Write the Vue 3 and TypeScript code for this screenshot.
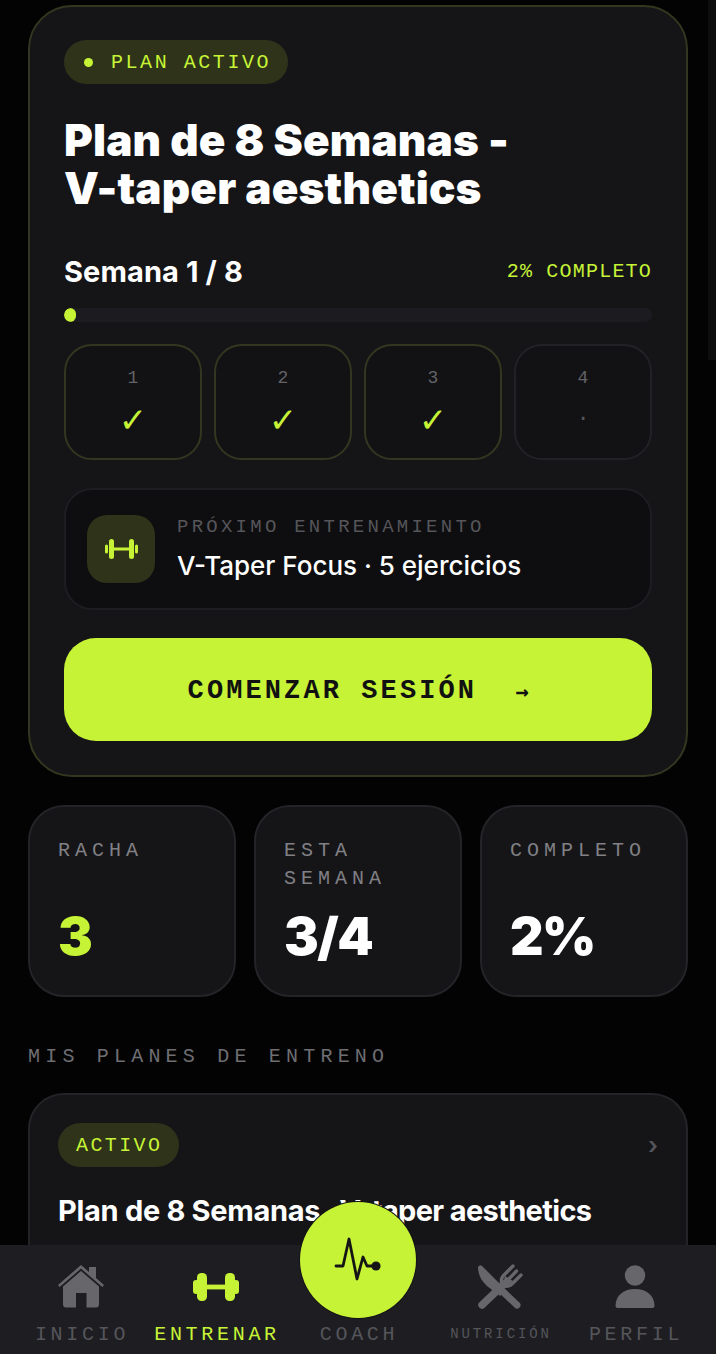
<script setup lang="ts">
interface Week {
  n: number
  done: boolean
}
interface Stat {
  label: string
  value: string
  accent?: boolean
}

const weeks: Week[] = [
  { n: 1, done: true },
  { n: 2, done: true },
  { n: 3, done: true },
  { n: 4, done: false },
]

const stats: Stat[] = [
  { label: 'RACHA', value: '3', accent: true },
  { label: 'ESTA SEMANA', value: '3/4' },
  { label: 'COMPLETO', value: '2%' },
]

const progress = 2
</script>

<template>
  <div class="screen">
    <div class="scroll-thumb"></div>
    <main class="content">
      <!-- plan activo -->
      <section class="hero">
        <div class="pill"><span class="dot"></span>PLAN ACTIVO</div>
        <h1 class="hero-title">Plan de 8 Semanas -<br />V-taper aesthetics</h1>
        <div class="week-row">
          <span class="week-name">Semana 1 / 8</span>
          <span class="week-pct">{{ progress }}% COMPLETO</span>
        </div>
        <div class="bar"><div class="bar-fill" :style="{ width: progress + '%' }"></div></div>
        <div class="weeks">
          <div v-for="w in weeks" :key="w.n" class="week" :class="{ done: w.done }">
            <span class="week-n">{{ w.n }}</span>
            <span v-if="w.done" class="week-check">✓</span>
            <span v-else class="week-dot">·</span>
          </div>
        </div>
        <div class="next">
          <div class="next-icon">
            <svg width="33" height="20" viewBox="0 0 33 20" fill="#c7f336">
              <rect x="0" y="5.5" width="3" height="9" rx="1.5" />
              <rect x="4" y="0" width="5" height="20" rx="2.5" />
              <rect x="9" y="8.5" width="15" height="3" />
              <rect x="24" y="0" width="5" height="20" rx="2.5" />
              <rect x="30" y="5.5" width="3" height="9" rx="1.5" />
            </svg>
          </div>
          <div class="next-text">
            <div class="next-label">PRÓXIMO ENTRENAMIENTO</div>
            <div class="next-title">V-Taper Focus · 5 ejercicios</div>
          </div>
        </div>
        <button class="start">
          <span>COMENZAR SESIÓN</span>
          <span class="start-arrow">→</span>
        </button>
      </section>

      <!-- stats -->
      <section class="stats">
        <div v-for="s in stats" :key="s.label" class="stat">
          <div class="stat-label">{{ s.label }}</div>
          <div class="stat-value" :class="{ accent: s.accent }">{{ s.value }}</div>
        </div>
      </section>

      <h2 class="section-title">MIS PLANES DE ENTRENO</h2>

      <section class="plan">
        <div class="plan-top">
          <span class="plan-pill">ACTIVO</span>
          <span class="chevron">›</span>
        </div>
        <div class="plan-title"><span class="plan-title-a">Plan de 8 Semanas</span> <span class="plan-title-dash">-</span> V-taper aesthetics</div>
      </section>
    </main>

    <!-- navegación inferior -->
    <nav class="nav">
      <div class="nav-item">
        <svg class="nav-icon" width="46" height="43" viewBox="0 0 46 43" fill="#66666b">
          <path d="M23 0 L31 7 V2 H38 V13 L46 20 L44.4 22 L23 3.6 L1.6 22 L0 20 Z" />
          <path d="M23 6 L41 21.5 V39 Q41 42.5 38 42.5 H28.5 V28 H18 V42.5 H8 Q5 42.5 5 39 V21.5 Z" />
        </svg>
        <span class="nav-label">INICIO</span>
      </div>
      <div class="nav-item active">
        <svg class="nav-icon" width="46" height="28" viewBox="0 0 46 28" fill="#c7f336">
          <rect x="0" y="7" width="6" height="14" rx="3" />
          <rect x="4" y="0" width="10" height="28" rx="4.5" />
          <rect x="13" y="11.6" width="20" height="4.8" />
          <rect x="32" y="0" width="10" height="28" rx="4.5" />
          <rect x="40" y="7" width="6" height="14" rx="3" />
        </svg>
        <span class="nav-label">ENTRENAR</span>
      </div>
      <div class="nav-item">
        <span class="nav-label">COACH</span>
      </div>
      <div class="nav-item">
        <svg class="nav-icon food" width="46" height="46" viewBox="0 0 46 46" fill="none" stroke="#66666b" stroke-linecap="round">
          <path d="M22 24 L40 41" stroke-width="7" />
          <path d="M1 3 Q3 0 5 2 L29 26 L23 32 L10 22 Q1 14 1 3 Z" fill="#66666b" stroke="none" />
          <path d="M5 41 L27 20" stroke-width="7.5" />
          <path d="M25 20 Q23 14 28 10 L36 2 M29 18 L39.5 7 M27 22 Q32 23 35 20 L44 11" stroke-width="3.4" />
          <path d="M26 20 L28 12 L36 17 L30 22 Z" fill="#66666b" stroke="none" />
        </svg>
        <span class="nav-label small">NUTRICIÓN</span>
      </div>
      <div class="nav-item">
        <svg class="nav-icon" width="40" height="44" viewBox="0 0 40 44" fill="#66666b">
          <circle cx="20" cy="10.5" r="10.2" />
          <path d="M0.5 41 C0.5 30 9 24 20 24 C31 24 39.5 30 39.5 41 Q39.5 43 37.5 43 H2.5 Q0.5 43 0.5 41 Z" />
        </svg>
        <span class="nav-label">PERFIL</span>
      </div>
      <button class="coach">
        <svg width="50" height="46" viewBox="0 0 50 46" fill="none" stroke="#151515" stroke-width="2.8" stroke-linejoin="round" stroke-linecap="round">
          <path d="M3 29 H10 L16 2 L24 42 L30 20 L34 29 H42" />
          <circle cx="43" cy="29" r="4.6" fill="#151515" stroke="none" />
        </svg>
      </button>
    </nav>
  </div>
</template>

<style scoped>
.screen {
  position: relative;
  width: 716px;
  height: 1354px;
  overflow: hidden;
  background: #030303;
  font-family: Inter, 'Liberation Sans', sans-serif;
  color: #fff;
}
.scroll-thumb {
  position: absolute;
  top: 0;
  right: 0;
  width: 8px;
  height: 360px;
  background: #0d0d0e;
}
.content {
  display: flex;
  flex-direction: column;
  padding: 5px 28px 0;
}

.hero {
  height: 772px;
  box-sizing: border-box;
  padding: 33px 34px 0;
  background: #151518;
  border: 2px solid #33371f;
  border-radius: 44px;
}
.pill {
  display: inline-flex;
  align-items: center;
  height: 44px;
  padding: 0 17px 0 20px;
  background: #2e3319;
  border-radius: 22px;
  color: #c7f336;
  font: 20px 'Liberation Mono', monospace;
  letter-spacing: 2.55px;
}
.dot {
  width: 9px;
  height: 9px;
  margin-right: 18px;
  border-radius: 50%;
  background: #c7f336;
}
.hero-title {
  margin: 32px 0 0;
  font-size: 44px;
  line-height: 48px;
  font-weight: 900;
  letter-spacing: 0.15px;
}
.week-row {
  display: flex;
  justify-content: space-between;
  align-items: center;
  margin-top: 42px;
  height: 34px;
}
.week-name {
  font-size: 29px;
  font-weight: 700;
  letter-spacing: 0.1px;
}
.week-pct {
  color: #c7f336;
  font: 20px 'Liberation Mono', monospace;
  letter-spacing: 1.2px;
}
.bar {
  height: 14px;
  margin-top: 20px;
  background: #1c1c20;
  border-radius: 7px;
  overflow: hidden;
}
.bar-fill {
  height: 100%;
  background: #c7f336;
  border-radius: 7px;
}
.weeks {
  display: grid;
  grid-template-columns: repeat(4, 1fr);
  gap: 12px;
  margin-top: 22px;
}
.week {
  height: 116px;
  box-sizing: border-box;
  display: flex;
  flex-direction: column;
  align-items: center;
  padding-top: 20px;
  border: 2px solid #222226;
  border-radius: 28px;
  background: #121215;
}
.week.done {
  border-color: #33371f;
}
.week-n {
  font: 18px/24px 'Liberation Mono', monospace;
  color: #626267;
}
.week-check {
  margin-top: 12px;
  font: bold 34px/36px 'DejaVu Sans', sans-serif;
  color: #c7f336;
}
.week-dot {
  margin-top: 12px;
  font: 22px/36px 'Liberation Mono', monospace;
  color: #55555a;
}
.next {
  display: flex;
  align-items: center;
  gap: 22px;
  height: 122px;
  box-sizing: border-box;
  margin-top: 28px;
  padding-left: 21px;
  background: #0e0e10;
  border: 2px solid #1e1e22;
  border-radius: 28px;
}
.next-icon {
  display: flex;
  align-items: center;
  justify-content: center;
  width: 68px;
  height: 68px;
  background: #2e3319;
  border-radius: 20px;
}
.next-text {
  padding-bottom: 2px;
}
.next-label {
  color: #55555a;
  font: 19px/24px 'Liberation Mono', monospace;
  letter-spacing: 3.25px;
}
.next-title {
  margin-top: 11px;
  font-size: 26px;
  line-height: 32px;
  font-weight: 500;
}
.start {
  display: flex;
  align-items: center;
  justify-content: center;
  gap: 38px;
  width: 100%;
  height: 103px;
  margin-top: 28px;
  padding: 3px 0 0;
  border: none;
  border-radius: 32px;
  background: #c7f336;
  color: #111;
  font: bold 27px 'Liberation Mono', monospace;
  letter-spacing: 3.1px;
}
.start-arrow {
  font: bold 22px 'DejaVu Sans Mono', monospace;
  letter-spacing: 0;
}

.stats {
  display: grid;
  grid-template-columns: repeat(3, 1fr);
  gap: 18px;
  margin-top: 28px;
}
.stat {
  height: 192px;
  box-sizing: border-box;
  padding: 30px 28px 0;
  background: #151518;
  border: 2px solid #242428;
  border-radius: 36px;
  position: relative;
}
.stat-label {
  color: #808085;
  font: 20px/28px 'Liberation Mono', monospace;
  letter-spacing: 5px;
}
.stat-value {
  position: absolute;
  left: 28px;
  top: 98px;
  font-size: 52px;
  line-height: 64px;
  font-weight: 900;
  letter-spacing: -1.5px;
}
.stat-value.accent {
  color: #c7f336;
}

.section-title {
  margin: 46px 0 0;
  color: #6e6e73;
  font: 20px/28px 'Liberation Mono', monospace;
  letter-spacing: 5.2px;
}

.plan {
  margin-top: 22px;
  height: 300px;
  box-sizing: border-box;
  padding: 28px 28px 0;
  background: #151518;
  border: 2px solid #242428;
  border-radius: 36px;
}
.plan-top {
  display: flex;
  justify-content: space-between;
  align-items: center;
}
.plan-pill {
  display: inline-flex;
  align-items: center;
  height: 44px;
  padding: 0 17px 0 18px;
  background: #2e3319;
  border-radius: 22px;
  color: #c7f336;
  font: 20px 'Liberation Mono', monospace;
  letter-spacing: 2.4px;
}
.chevron {
  color: #55555a;
  font-size: 24px;
  font-weight: 600;
}
.plan-title {
  margin-top: 25px;
  font-size: 29px;
  line-height: 38px;
  font-weight: 700;
  letter-spacing: -0.65px;
}
.plan-title-a {
  letter-spacing: -0.3px;
}
.plan-title-dash {
  margin-right: -6px;
}

.nav {
  position: absolute;
  left: 0;
  right: 0;
  bottom: 0;
  height: 109px;
  display: grid;
  grid-template-columns: 162px 108px 176px 108px 162px;
  background: #1e1e22;
}
.nav-item {
  position: relative;
  display: flex;
  flex-direction: column;
  align-items: center;
  justify-content: flex-end;
  padding-bottom: 7px;
}
.nav-icon {
  position: absolute;
  top: 20px;
}
.nav-icon.food {
  top: 19px;
}
.nav-item.active .nav-icon {
  top: 28px;
}
.nav-label {
  padding-left: 2px;
  color: #55555a;
  font: 20px/24px 'Liberation Mono', monospace;
  letter-spacing: 3.7px;
  white-space: nowrap;
}
.nav-label.small {
  font-size: 14px;
  letter-spacing: 2.9px;
  padding-bottom: 1px;
}
.nav-item.active .nav-label {
  color: #c7f336;
}
.coach {
  position: absolute;
  left: 300px;
  top: -43px;
  width: 116px;
  height: 116px;
  padding: 0;
  display: flex;
  align-items: center;
  justify-content: center;
  border: none;
  border-radius: 50%;
  background: #c7f336;
  box-shadow: 0 0 0 1px #151518;
}
</style>

<style>
html,
body {
  margin: 0;
  background: #030303;
}
</style>
